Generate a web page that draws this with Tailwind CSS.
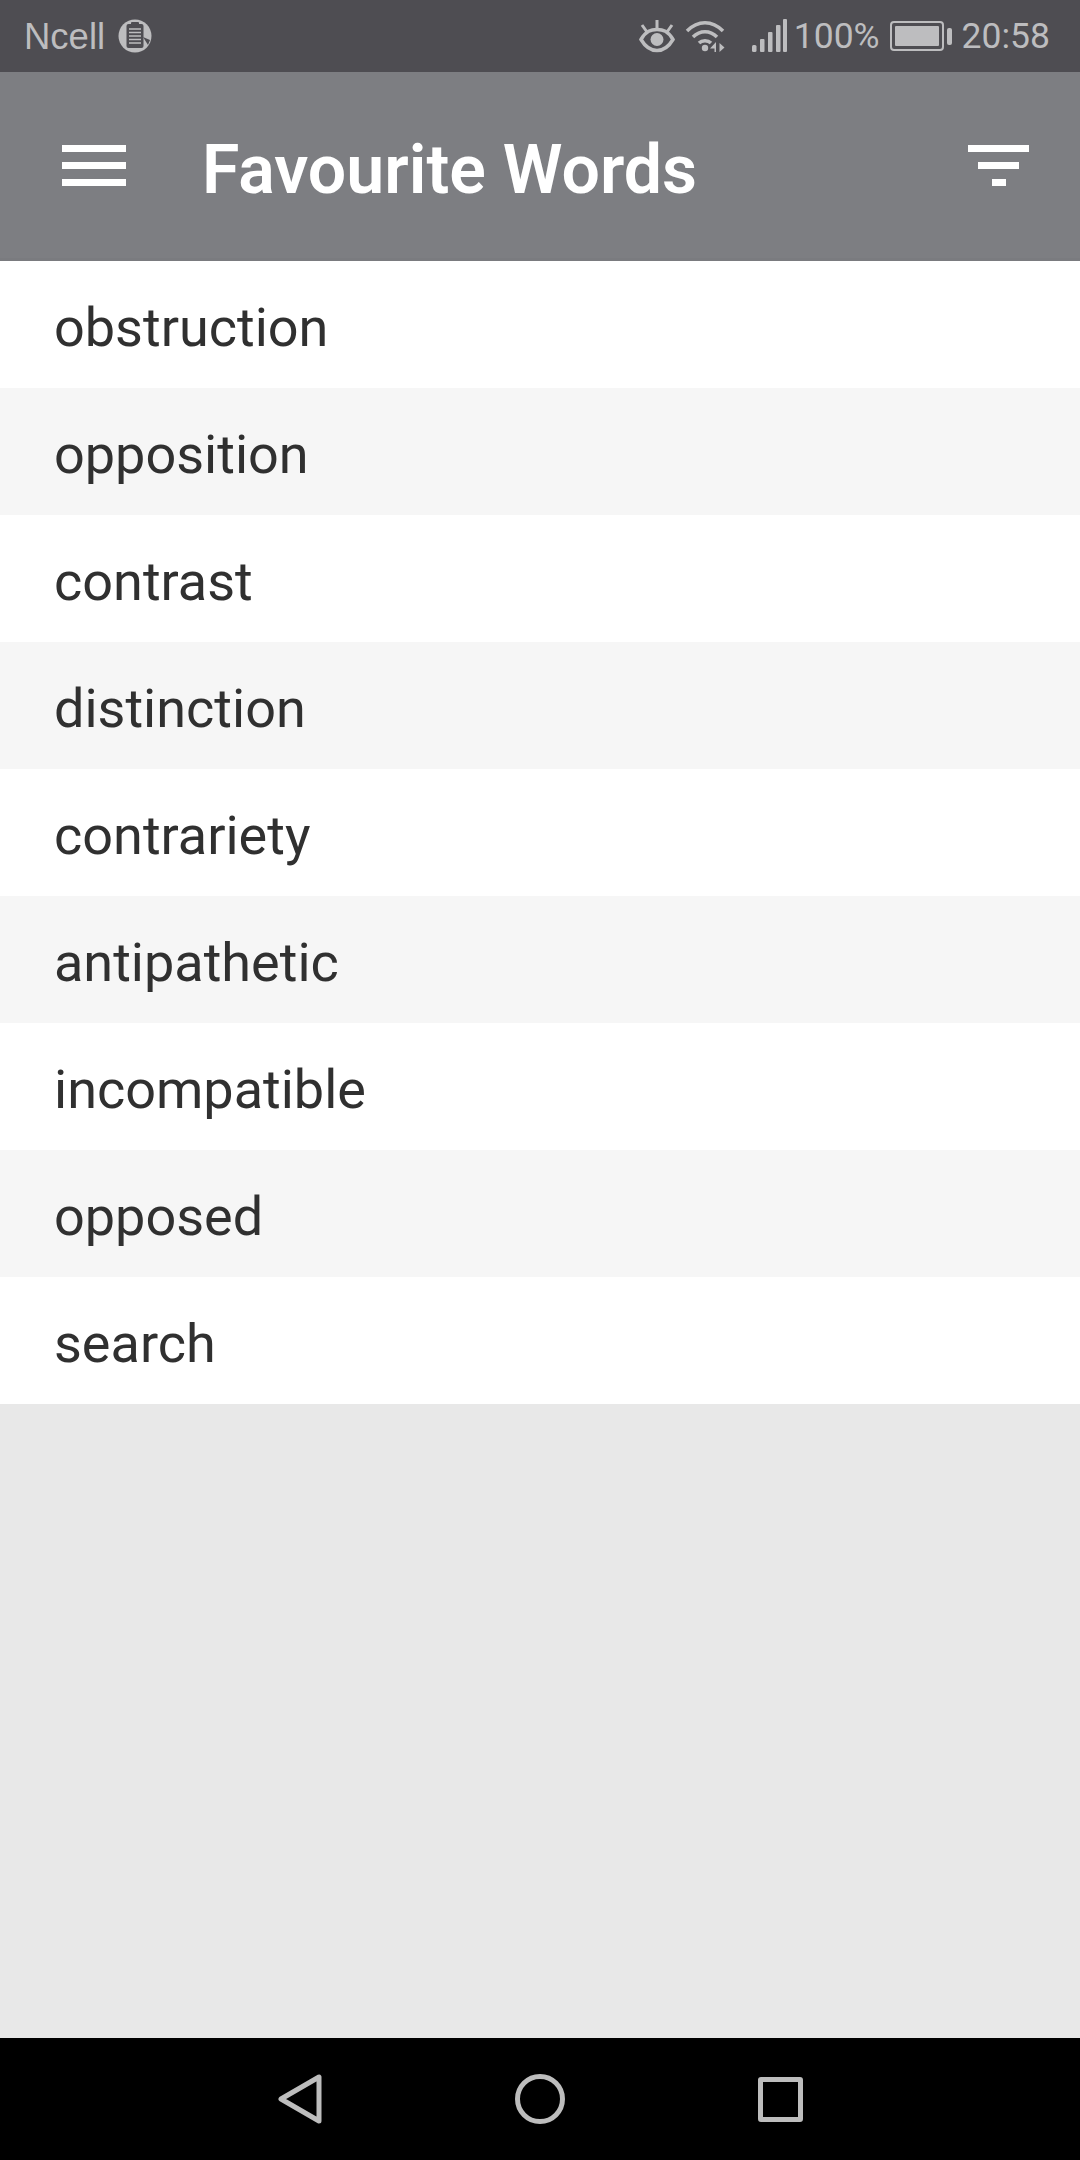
<!DOCTYPE html>
<html lang="en">
<head>
    <meta charset="UTF-8">
    <meta name="viewport" content="width=device-width, initial-scale=1.0">
    <title>Favourite Words</title>
    <script src="https://cdn.jsdelivr.net/npm/@tailwindcss/browser@4"></script>
</head>
<body class="font-['Roboto',sans-serif]">
    <div class="flex flex-col w-[1080px] h-[2160px] bg-[#e8e8e8] overflow-hidden">
        <!-- Status bar -->
        <div class="flex items-center justify-between h-[72px] bg-[#4e4d52] text-[#bdbdbf] text-[35.500px] pl-[24px] pr-[30px] shrink-0">
            <div class="flex items-center">
                <span class="font-['Liberation_Sans',sans-serif] text-[36.500px] pt-[2px]">Ncell</span>
                <svg class="ml-[13px] w-[34px] h-[34px]" viewBox="0 0 34 34">
                    <circle cx="17" cy="17" r="16.5" fill="#bdbdbf"/>
                    <rect x="8.5" y="5" width="17" height="24" rx="2" fill="#4e4d52"/>
                    <rect x="13" y="3" width="8" height="4" rx="1" fill="#4e4d52"/>
                    <path d="M11 10h12M11 13.5h12M11 17h12M11 20.500h12M11 24h12" stroke="#bdbdbf" stroke-width="1.500"/>
                    <path d="M25 18l7 3-2 5z" fill="#4e4d52"/>
                </svg>
            </div>
            <div class="flex items-center">
                <!-- eye -->
                <svg class="w-[36px] h-[34px]" viewBox="0 0 36 34" fill="none" stroke="#bdbdbf">
                    <path d="M2 20.500C7 12 12 10.500 18 10.500S29 12 34 20.500C29 29 24 31.500 18 31.500S7 29 2 20.500Z" stroke-width="3.500"/>
                    <circle cx="18" cy="20.500" r="6.500" fill="#bdbdbf" stroke="none"/>
                    <path d="M18 1v8M3 6l5 7M33 6l-5 7" stroke-width="3"/>
                </svg>
                <!-- wifi -->
                <svg class="ml-[10px] w-[40px] h-[34px]" viewBox="0 0 40 34" fill="none" stroke="#bdbdbf" stroke-width="3.500">
                    <path d="M2 12C13 1 27 1 38 12"/>
                    <path d="M8 18C15 11 25 11 32 18"/>
                    <path d="M14 24C17 21 23 21 26 24"/>
                    <circle cx="20" cy="29" r="3.200" fill="#bdbdbf" stroke="none"/>
                    <path d="M31 23v10h-1.500v-3.500H25zM34.500 24l5 4.500-5 4.500z" fill="#bdbdbf" stroke="none"/>
                </svg>
                <!-- signal -->
                <svg class="ml-[27px] w-[35px] h-[34px]" viewBox="0 0 35 34" fill="#bdbdbf">
                    <rect x="0" y="26" width="4.500" height="7" rx="1.500"/>
                    <rect x="8" y="20" width="4.500" height="13" rx="1"/>
                    <rect x="16" y="13" width="4.500" height="20" rx="1"/>
                    <rect x="24" y="6" width="4.500" height="27" rx="1"/>
                    <rect x="31" y="0" width="4" height="33" rx="1"/>
                </svg>
                <span class="ml-[7px] pt-[2px]">100%</span>
                <!-- battery -->
                <div class="ml-[10px] flex items-center">
                    <div class="w-[54px] h-[30px] rounded-[4px] border-2 border-[#bdbdbf] p-[3px]">
                        <div class="w-full h-full bg-[#bdbdbf] rounded-[1px]"></div>
                    </div>
                    <div class="ml-[3px] w-[5px] h-[17px] bg-[#bdbdbf] rounded-[2px]"></div>
                </div>
                <span class="ml-[10px] pt-[2px]">20:58</span>
            </div>
        </div>

        <!-- Header -->
        <div class="flex items-center h-[189px] bg-[#7d7e82] border-b-[3px] border-[#7a7b7f] pl-[62px] pr-[51px] shrink-0">
            <div class="flex flex-col gap-[10px] w-[64px]">
                <div class="h-[7px] bg-white"></div>
                <div class="h-[7px] bg-white"></div>
                <div class="h-[7px] bg-white"></div>
            </div>
            <h1 class="ml-[76px] mt-[10px] flex-1 text-[68px] leading-none font-semibold text-white">Favourite Words</h1>
            <div class="flex flex-col items-center gap-[10px] w-[61px]">
                <div class="h-[7px] w-[61px] bg-white"></div>
                <div class="h-[7px] w-[41px] bg-white"></div>
                <div class="h-[7px] w-[14px] bg-white"></div>
            </div>
        </div>

        <!-- Word list -->
        <ul class="text-[54px] text-[#303030] shrink-0">
            <li class="flex items-center h-[127px] pt-[6px] pl-[54px] bg-white">obstruction</li>
            <li class="flex items-center h-[127px] pt-[6px] pl-[54px] bg-[#f6f6f6]">opposition</li>
            <li class="flex items-center h-[127px] pt-[6px] pl-[54px] bg-white">contrast</li>
            <li class="flex items-center h-[127px] pt-[6px] pl-[54px] bg-[#f6f6f6]">distinction</li>
            <li class="flex items-center h-[127px] pt-[6px] pl-[54px] bg-white">contrariety</li>
            <li class="flex items-center h-[127px] pt-[6px] pl-[54px] bg-[#f6f6f6]">antipathetic</li>
            <li class="flex items-center h-[127px] pt-[6px] pl-[54px] bg-white">incompatible</li>
            <li class="flex items-center h-[127px] pt-[6px] pl-[54px] bg-[#f6f6f6]">opposed</li>
            <li class="flex items-center h-[127px] pt-[6px] pl-[54px] bg-white">search</li>
        </ul>
        <div class="flex-1"></div>

        <!-- Nav bar -->
        <div class="flex items-center h-[122px] bg-black pl-[278px] shrink-0">
            <svg class="w-[44px] h-[50px]" viewBox="0 0 44 50" fill="none" stroke="#bdbdbd" stroke-width="5" stroke-linejoin="round">
                <path d="M41 3V47L3 25Z"/>
            </svg>
            <svg class="ml-[193px] w-[50px] h-[50px]" viewBox="0 0 50 50" fill="none" stroke="#bdbdbd" stroke-width="5">
                <circle cx="25" cy="25" r="22.500"/>
            </svg>
            <div class="ml-[193px] w-[45px] h-[45px] border-[5px] border-[#bdbdbd] rounded-[3px]"></div>
        </div>
    </div>
</body>
</html>
